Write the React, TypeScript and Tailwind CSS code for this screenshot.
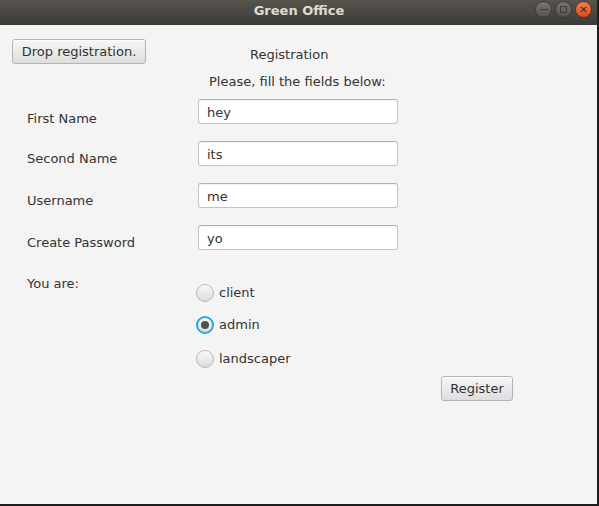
const font = "font-['DejaVu_Sans',sans-serif]";

const Field = ({ value }: { value: string }) => (
  <div className="w-[200px] h-[25px] bg-white border border-[#c4c4c4] border-t-[#b0b0b0] rounded-[3px] pl-[8px] flex items-center shadow-[inset_0_1px_1px_rgba(0,0,0,0.06)]">
    <span className="leading-[15px] pt-[1px]">{value}</span>
  </div>
);

const Radio = ({ label, checked }: { label: string; checked?: boolean }) => (
  <div className="flex items-center h-[17px]">
    <div
      className={
        checked
          ? "w-[18px] h-[18px] rounded-full border-[2px] border-[#2ba7dc] bg-gradient-to-b from-[#f9f9f9] to-[#dcdcdc] flex items-center justify-center"
          : "w-[18px] h-[18px] rounded-full border border-[#b9b9b9] bg-gradient-to-b from-[#f9f9f9] to-[#dcdcdc]"
      }
    >
      {checked && <div className="w-[8px] h-[8px] rounded-full bg-[#505050]" />}
    </div>
    <span className="ml-[5px] leading-[15px]">{label}</span>
  </div>
);

const Btn = ({ children, w }: { children: string; w: string }) => (
  <div
    className={`${w} h-[25px] rounded-[3px] border border-[#b3b3b3] bg-gradient-to-b from-[#f6f6f6] to-[#dedede] flex items-center justify-center leading-[15px] shadow-[inset_0_1px_0_#fff]`}
  >
    {children}
  </div>
);

export default function App() {
  return (
    <div className={`${font} w-[599px] h-[506px] bg-[#f4f4f4] text-[13px] text-[#333333] flex flex-col border-r-[2px] border-b-[2px] border-[#1e1e1e]`}>
      <div className="h-[25px] bg-gradient-to-b from-[#57544e] to-[#3c3b37] flex items-center relative">
        <div className="flex-1 text-center font-bold text-[13px] text-[#dfdbd2] leading-[15px] pl-[1px] pb-[4px]">
          Green Office
        </div>
        <div className="absolute right-[5px] top-[1px] flex gap-[3px]">
          <div className="w-[17px] h-[17px] rounded-full bg-gradient-to-b from-[#7a7772] to-[#56534f] border border-[#3a3935] flex items-center justify-center">
            <div className="w-[8px] h-[1.5px] bg-[#3c3b37]" />
          </div>
          <div className="w-[17px] h-[17px] rounded-full bg-gradient-to-b from-[#7a7772] to-[#56534f] border border-[#3a3935] flex items-center justify-center">
            <div className="w-[7px] h-[7px] border-[1.5px] border-[#3c3b37]" />
          </div>
          <div className="w-[17px] h-[17px] rounded-full bg-gradient-to-b from-[#f47a4f] to-[#df4a16] border border-[#3a3935] flex items-center justify-center text-[#3c2a20] text-[10px] leading-none">
            ✕
          </div>
        </div>
      </div>

      <div className="flex items-start">
        <div className="ml-[12px] mt-[14px]">
          <Btn w="w-[134px]">Drop registration.</Btn>
        </div>
        <div className="ml-[104px] mt-[22px] leading-[15px]">Registration</div>
      </div>

      <div className="ml-[209px] mt-[10px] leading-[15px]">Please, fill the fields below:</div>

      <div className="mt-[10px] flex flex-col">
        {[
          ["First Name", "hey", "pt-[12px]"],
          ["Second Name", "its", "pt-[10px]"],
          ["Username", "me", "pt-[10px]"],
          ["Create Password", "yo", "pt-[10px]"],
        ].map(([label, value, pt]) => (
          <div key={label} className="flex h-[42px]">
            <div className={`w-[198px] shrink-0 pl-[27px] leading-[15px] ${pt}`}>{label}</div>
            <Field value={value} />
          </div>
        ))}
      </div>

      <div className="flex">
        <div className="w-[196px] shrink-0 pl-[27px] pt-[9px] leading-[15px]">You are:</div>
        <div className="pt-[17px] flex flex-col">
          <Radio label="client" />
          <div className="mt-[15px]">
            <Radio label="admin" checked />
          </div>
          <div className="mt-[17px]">
            <Radio label="landscaper" />
          </div>
        </div>
      </div>

      <div className="ml-[441px] mt-[9px]">
        <Btn w="w-[72px]">Register</Btn>
      </div>
    </div>
  );
}
